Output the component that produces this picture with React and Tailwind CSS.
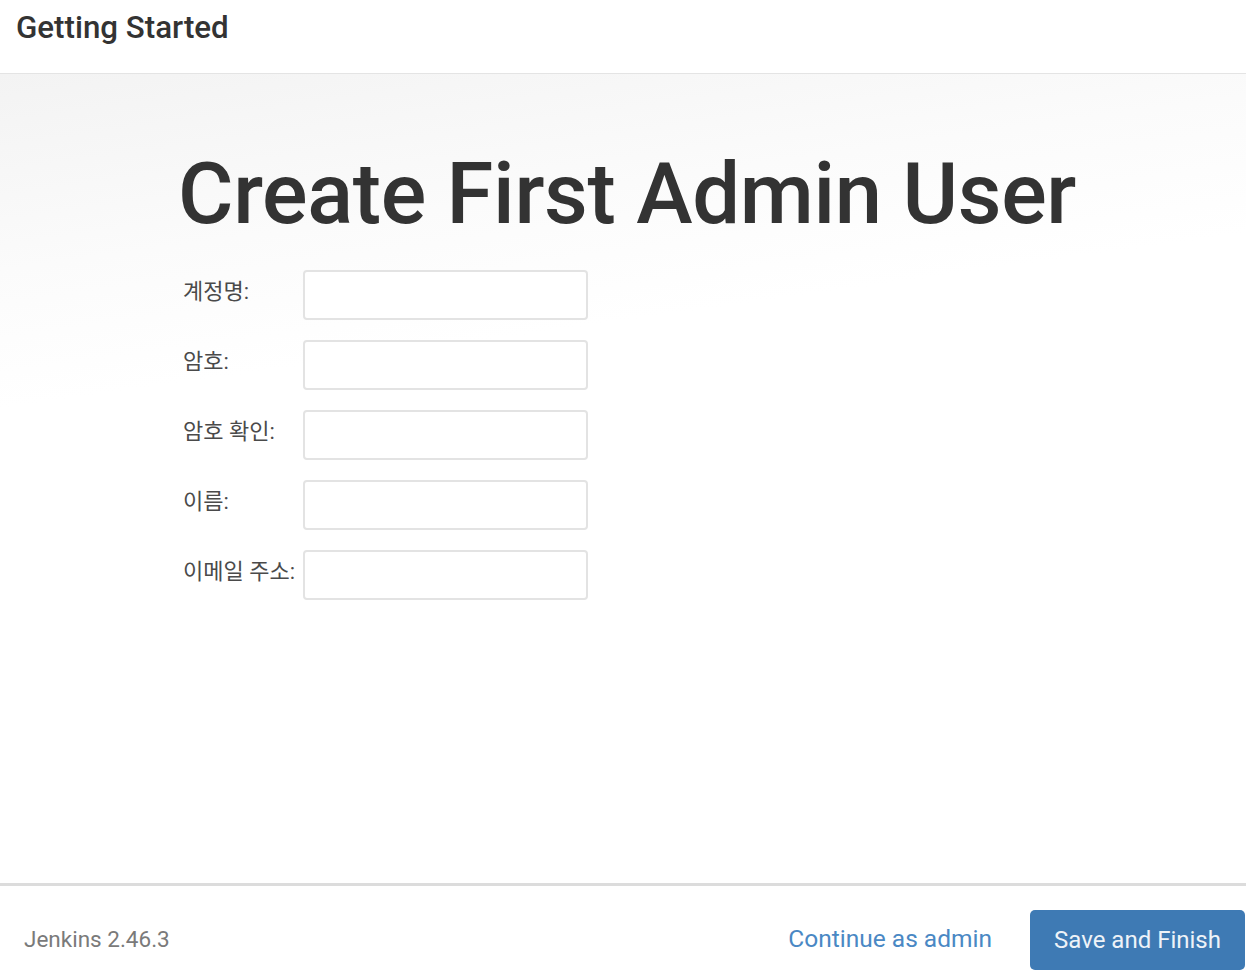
import React from "react";

const font = { fontFamily: "Roboto, 'Noto Sans CJK KR', sans-serif" };

const fields = ["계정명:", "암호:", "암호 확인:", "이름:", "이메일 주소:"];

export default function App() {
  return (
    <div className="w-[1247px] h-[977px] bg-white overflow-hidden" style={font}>
      <div className="w-[1246px] h-full flex flex-col">
        <div className="h-[74px] border-b border-[#e4e4e4] pl-[16px] pt-[8px]">
          <h1 className="text-[31.3px] font-medium text-[#333] leading-[40px]">Getting Started</h1>
        </div>
        <div className="flex-1 bg-[linear-gradient(172deg,#f3f3f3_0%,#fbfbfb_20%,#ffffff_34%)] pl-[180px] pt-[70px]">
          <h2 className="-ml-[2px] text-[85px] font-medium text-[#333] leading-[100px] tracking-[-0.35px]">Create First Admin User</h2>
          <div className="mt-[26px] pl-[3px] flex flex-col gap-[20px]">
            {fields.map((f) => (
              <div key={f} className="flex items-center">
                <label className="w-[120px] text-[22px] text-[#4a4a4a] leading-[28px] -mt-[6px] whitespace-nowrap">{f}</label>
                <input className="w-[285px] h-[50px] border-2 border-[#e3e3e3] rounded-[4px] bg-white outline-none" />
              </div>
            ))}
          </div>
        </div>
        <div className="h-[94px] border-t-[3px] border-[#dcdcdc] flex items-center pl-[24px] pr-[1px]">
          <span className="text-[22.5px] text-[#7a7a7a] flex-1 mt-[16px]">Jenkins 2.46.3</span>
          <span className="text-[24.5px] text-[#4a88c4] mr-[38px] mt-[16px]">Continue as admin</span>
          <button className="w-[215px] h-[60px] bg-[#3e7ab4] text-[#eef3f8] text-[24px] rounded-[5px] mt-[16px]">Save and Finish</button>
        </div>
      </div>
    </div>
  );
}
